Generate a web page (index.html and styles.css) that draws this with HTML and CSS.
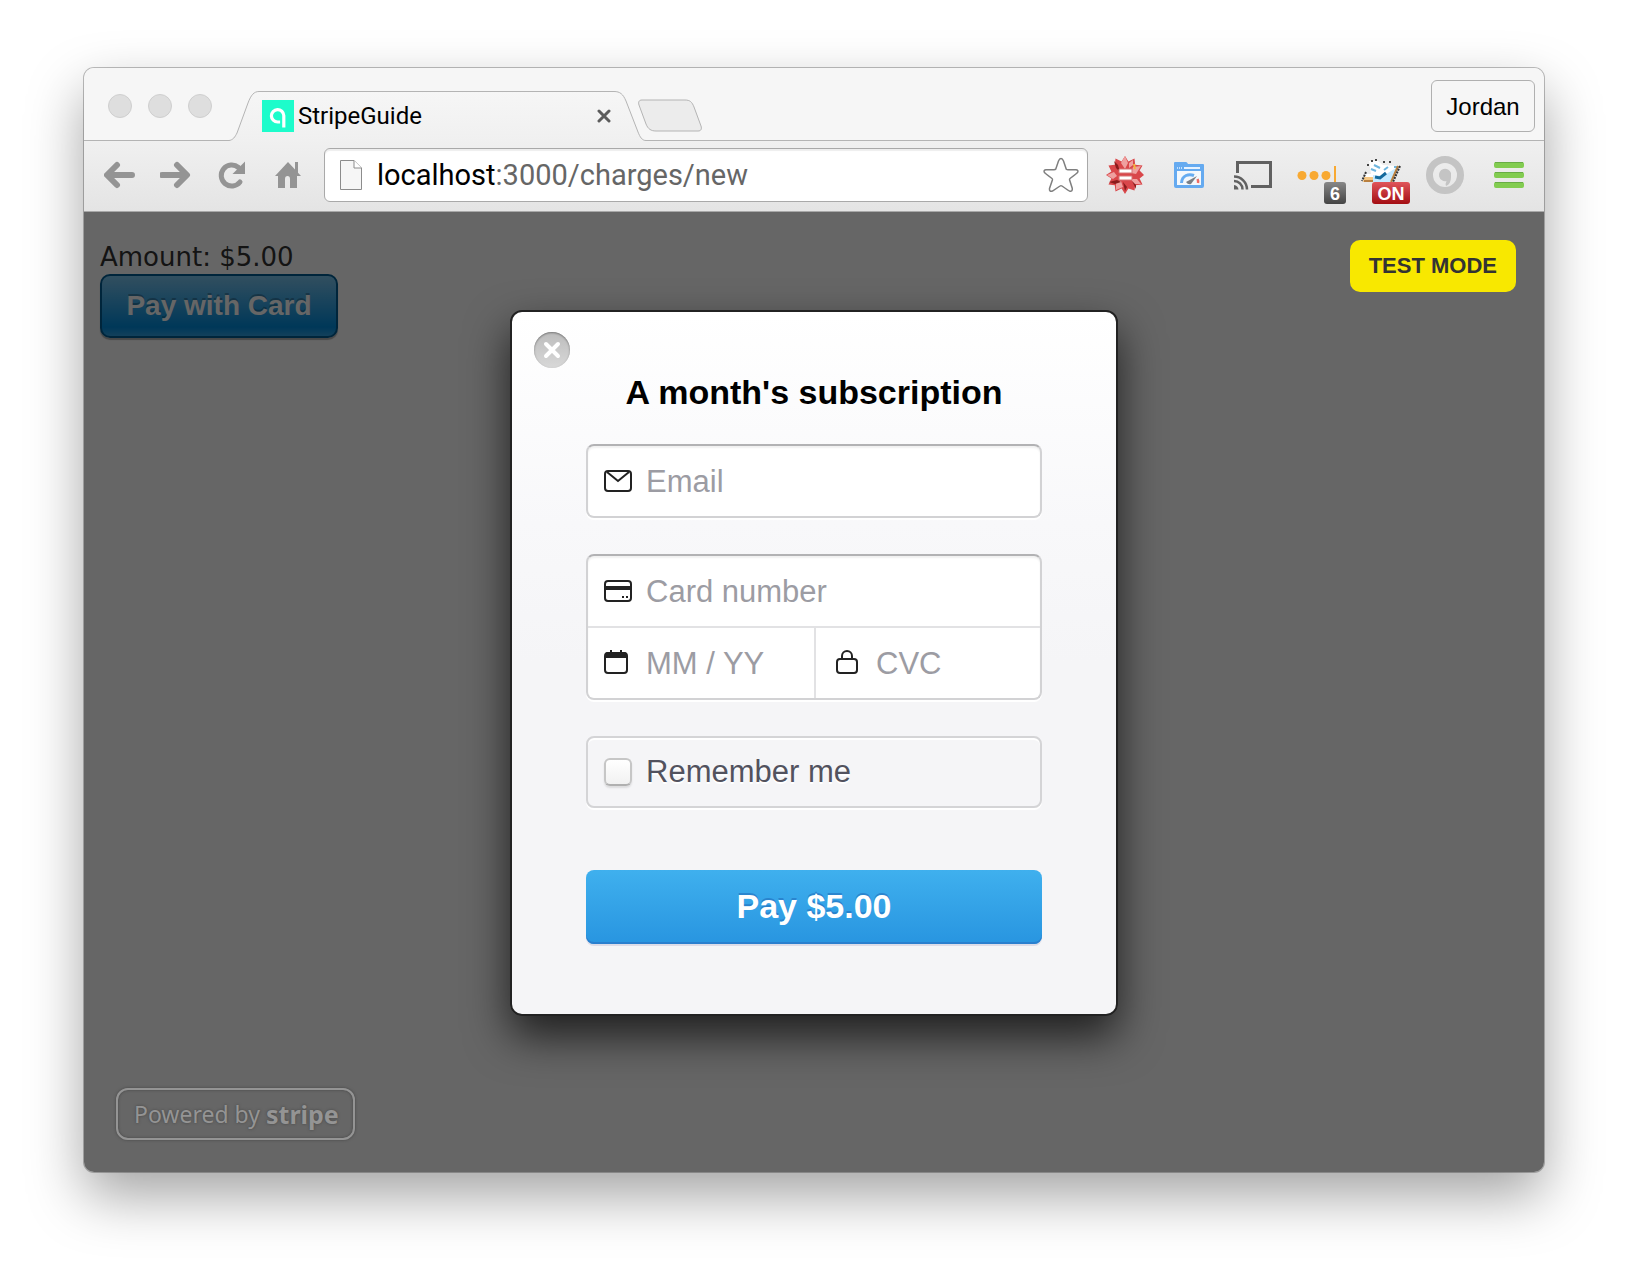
FILE: index.html
```html
<!DOCTYPE html>
<html lang="en">
<head>
  <meta charset="UTF-8" />
  <meta name="viewport" content="width=device-width, initial-scale=1.0"/>
  <title>StripeGuide</title>
  <link rel="stylesheet" href="styles.css">
</head>
<body>

  <div class="window">

    <!-- Tab strip -->
    <header class="tab-strip">
      <div class="lights">
        <span class="light"></span>
        <span class="light"></span>
        <span class="light"></span>
      </div>

      <div class="tab">
        <svg class="tab-shape" viewBox="0 0 417 50" aria-hidden="true">
          <defs>
            <linearGradient id="tabFill" x1="0" y1="0" x2="0" y2="1">
              <stop offset="0" stop-color="#f6f6f6"/>
              <stop offset="1" stop-color="#f0f0f0"/>
            </linearGradient>
          </defs>
          <path d="M0 50V49.5C4 49 6 46 8 42L19 12C22 4 25 .5 30 .5H385C391 .5 394 3 397 10L409 41C411 46 413 49.5 417 49.5V50Z" fill="url(#tabFill)"/>
          <path d="M0 49.5C4 49 6 46 8 42L19 12C22 4 25 .5 30 .5H385C391 .5 394 3 397 10L409 41C411 46 413 49.5 417 49.5" fill="none" stroke="#b4b4b4"/>
        </svg>
        <svg class="favicon" viewBox="0 0 32 32" aria-hidden="true">
          <rect width="32" height="32" fill="#1dfccb"/>
          <path d="M21.800 27.500V15.500a6.200 6.200 0 1 0-6.200 6.500h2.500" fill="none" stroke="#fff" stroke-width="3.200"/>
        </svg>
        <span class="tab-title">StripeGuide</span>
        <button class="tab-close" aria-label="Close tab">
          <svg viewBox="0 0 14 14"><path d="M2 2l10 10M12 2L2 12" stroke="#5c5c5c" stroke-width="3" stroke-linecap="round"/></svg>
        </button>
      </div>

      <button class="new-tab" aria-label="New tab">
        <svg viewBox="0 0 66 34"><path d="M5 1H48C53 1 55 3 57 8L64 27C65 30 64 32 61 32H19C14 32 11 30 9 25L2 6C1 3 2 1 5 1Z" fill="#ececec" stroke="#b4b4b4"/></svg>
      </button>

      <button class="profile">Jordan</button>
    </header>

    <!-- Toolbar -->
    <div class="toolbar">
      <nav class="nav">
        <button aria-label="Back">
          <svg viewBox="0 0 32 32"><path d="M13 6L3 16l10 10M4 16h24" fill="none" stroke="#949494" stroke-width="6" stroke-linecap="round" stroke-linejoin="round"/></svg>
        </button>
        <button aria-label="Forward">
          <svg viewBox="0 0 32 32"><path d="M17 6l10 10-10 10M26 16H2" fill="none" stroke="#949494" stroke-width="6" stroke-linecap="round" stroke-linejoin="round"/></svg>
        </button>
        <button aria-label="Reload">
          <svg viewBox="0 0 32 32"><path d="M22.500 8.500A10.500 10.500 0 1 0 24 23" fill="none" stroke="#949494" stroke-width="5" stroke-linecap="round"/><path d="M29 2.500V15H16.500Z" fill="#949494"/></svg>
        </button>
        <button aria-label="Home">
          <svg viewBox="0 0 32 32"><path d="M16 3L3 17h3v12h7v-9a2.500 3 0 0 1 5 0v9h7V17h4l-3-3.300V3h-3v7.500Z" fill="#949494"/></svg>
        </button>
      </nav>

      <div class="omnibox">
        <svg class="page-icon" viewBox="0 0 24 32" aria-hidden="true">
          <path d="M1.500 1.500H15L22.500 9V30.500H1.500Z" fill="#f6f6f6" stroke="#8c8c8c"/>
          <path d="M15 1.500V9H22.500" fill="#fff" stroke="#8c8c8c"/>
        </svg>
        <p class="url">localhost<span>:3000/charges/new</span></p>
        <button class="bookmark" aria-label="Bookmark">
          <svg viewBox="0 0 36 36"><path d="M18 1.500Q19.500 1.500 20.500 4L23.300 12.200Q24 12.800 25 12.800H33Q35.500 13 34.800 15Q34.500 16 27 21.500Q26.300 22 26.600 23L29.300 31.500Q29.500 34.500 27 34.200Q26 34 19 29Q18 28.300 17 29L9.500 34Q6 35 6.500 31.500L9.400 23Q9.700 22 9 21.500Q1.500 16 1.200 15Q.500 13 3 12.800H11Q12.300 12.800 12.800 12L15.500 4Q16.500 1.500 18 1.500Z" fill="#fff" stroke="#7f7f7f" stroke-width="1.500"/></svg>
        </button>
      </div>

      <div class="extensions">
        <button aria-label="Burst extension">
          <svg viewBox="0 0 40 40">
            <path d="M20 1L23.400 6.400 29.500 3.500 30.200 9.800 37.500 10.500 34.600 15.600 39 20 34.600 23.400 37.500 29.500 30.200 30.200 29.500 35.500 23.400 33.600 20 39 16.600 33.600 10.500 36.500 9.800 30.200 3.500 29.500 6.400 23.400 1 20 6.400 16.600 3.500 10.500 9.800 9.800 10.500 3.500 16.600 6.400Z" fill="#d9474a"/>
            <path d="M20 1L23 8l-3 6-4-6ZM36 11l-5 8-5-1 2-6ZM36 29l-7 0-3-5 6 0ZM11 35l0-7 5-2 2 6ZM2 20l7-3 3 4-4 3ZM28 5l0 5-4 3 0-5Z" fill="#efa09f"/>
            <path d="M9 6l4 4 2 7-4-4ZM4 27l8-2 4 2-6 2ZM20 36l-2-9 4 5ZM27 26l4 4 0 4Z" fill="#8a1c1c"/>
            <path d="M14 14h13v4H14ZM14 21h13v4H14Z" fill="#fff" stroke="#d67475"/>
            <path d="M29 9l1 5" stroke="#f3b53f" stroke-width="2"/>
          </svg>
        </button>
        <button aria-label="Page speed">
          <svg viewBox="0 0 40 40">
            <path d="M5 8q0-1 1-1h11q1 0 2 2h15q1 0 1 1V31q0 2-2 2H7q-2 0-2-2Z" fill="#65aaf0"/>
            <path d="M8 16h24v14H8Z" fill="#f4f8fc"/>
            <path d="M15 13h16" stroke="#e6f2ff" stroke-width="2"/>
            <path d="M8 13h5" stroke="#c0e0ff" stroke-width="2" stroke-dasharray="1 1"/>
            <path d="M12.500 28C13 20 20 18.500 25 20.500" fill="none" stroke="#66acf1" stroke-width="3"/>
            <path d="M17 27l11-6-6 8q-3 1-5-2Z" fill="#7a7f85"/>
            <path d="M28.500 24q1 2 .500 4" fill="none" stroke="#ee6a63" stroke-width="2.500"/>
          </svg>
        </button>
        <button aria-label="Cast">
          <svg viewBox="0 0 40 40" fill="none" stroke="#616161" stroke-width="3">
            <path d="M4.500 18V7.500H37.500V31.500H18"/>
            <path d="M1 21.500a13 13 0 0 1 13 13M1 26a8.500 8.500 0 0 1 8.500 8.500" stroke-width="2.500"/>
            <path d="M1 30q4 .500 4.500 4.500H1Z" fill="#616161" stroke="none"/>
          </svg>
        </button>
        <button aria-label="Dots extension">
          <svg viewBox="0 0 40 40">
            <circle cx="5" cy="20.500" r="4.500" fill="#f8a932"/>
            <circle cx="17" cy="20.500" r="4.500" fill="#f8a932"/>
            <circle cx="29" cy="20.500" r="4.500" fill="#f8a932"/>
            <path d="M38 11v16" stroke="#f8a932" stroke-width="2"/>
          </svg>
          <span class="badge">6</span>
        </button>
        <button aria-label="Notebook extension">
          <svg viewBox="0 0 40 40">
            <path d="M8 6h9l5 4 15 1-7 16-29 0 4-8h5Z" fill="#fff"/>
            <path d="M12 20l10 1 13-8-6 14H12Z" fill="#c6eaff"/>
            <path d="M3 22h9v5H2Z" fill="#f6c782"/>
            <path d="M10 6h2M14 5h2M22 7h2M28 7h2M7 9v2" stroke="#444" stroke-width="2"/>
            <path d="M10 14l5 2M13 10l6 3M27 12l-4 3M33 12h4" fill="none" stroke="#6eb6df" stroke-width="2"/>
            <path d="M14 22l5 1 6-5" fill="none" stroke="#12699c" stroke-width="3"/>
            <path d="M37 11l-7 16M3 26h9" stroke="#b9803f" stroke-width="2"/>
            <path d="M39 11l-7 16M5 17l-4 9" stroke="#333" stroke-width="2" stroke-dasharray="2 1"/>
          </svg>
          <span class="badge badge-on">ON</span>
        </button>
        <button aria-label="Account extension">
          <svg viewBox="0 0 40 40">
            <circle cx="20" cy="20" r="15.500" fill="none" stroke="#c4c4c4" stroke-width="7"/>
            <path d="M26 14.500V22q0 7-5 9-1-2 .500-5A6.200 6.200 0 1 1 26 18Z" fill="#c4c4c4"/>
          </svg>
        </button>
        <button aria-label="Menu">
          <svg viewBox="0 0 40 40" fill="#82cc50">
            <rect x="5" y="7" width="30" height="6" rx="2"/>
            <rect x="5" y="17" width="30" height="6" rx="2"/>
            <rect x="5" y="27" width="30" height="6" rx="2"/>
            <path d="M6 7.500h28M6 17.500h28M6 27.500h28" stroke="#68ad45"/>
          </svg>
        </button>
      </div>
    </div>

    <div class="viewport">
      <!-- Page under the overlay -->
      <main class="page">
        <p class="amount">Amount: $5.00</p>
        <button class="stripe-button">Pay with Card</button>
      </main>

      <!-- Checkout overlay -->
      <div class="overlay">
        <div class="test-mode">TEST MODE</div>

        <div class="modal" role="dialog" aria-labelledby="modalTitle">
          <button class="close" aria-label="Close">
            <svg viewBox="0 0 18 18"><path d="M3 3l12 12M15 3L3 15" stroke="#fff" stroke-width="4" stroke-linecap="round"/></svg>
          </button>
          <form>
            <h1 id="modalTitle">A month's subscription</h1>

            <div class="fieldset">
              <label class="field">
                <svg viewBox="0 0 28 28"><rect x="1" y="4" width="26" height="20" rx="3" fill="none" stroke="#222" stroke-width="2"/><path d="M3 5l11 9L25 5" fill="none" stroke="#222" stroke-width="2"/></svg>
                <input type="email" placeholder="Email" aria-label="Email">
              </label>
            </div>

            <div class="fieldset">
              <label class="field">
                <svg viewBox="0 0 28 28"><rect x="1" y="4" width="26" height="20" rx="3" fill="none" stroke="#222" stroke-width="2"/><path d="M1 9h26v4H1ZM18 19h2v2h-2ZM22 19h2v2h-2Z" fill="#222"/></svg>
                <input type="text" placeholder="Card number" aria-label="Card number">
              </label>
              <div class="field-row">
                <label class="field">
                  <svg viewBox="0 0 28 28"><rect x="1" y="4" width="22" height="20" rx="3" fill="none" stroke="#222" stroke-width="2"/><path d="M1 9V6q0-3 3-3h2V1h2v2h8V1h2v2h2q3 0 3 3v3Z" fill="#222"/></svg>
                  <input type="text" placeholder="MM / YY" aria-label="MM / YY">
                </label>
                <label class="field">
                  <svg viewBox="0 0 28 28"><rect x="1" y="10" width="20" height="14" rx="3" fill="none" stroke="#222" stroke-width="2"/><path d="M6 10V7a5 5 0 0 1 10 0v3" fill="none" stroke="#222" stroke-width="2"/></svg>
                  <input type="text" placeholder="CVC" aria-label="CVC">
                </label>
              </div>
            </div>

            <label class="remember">
              <input type="checkbox">
              Remember me
            </label>

            <button type="button" class="submit">Pay $5.00</button>
          </form>
        </div>

        <a class="powered" href="#">Powered by <strong>stripe</strong></a>
      </div>
    </div>

  </div>

</body>
</html>
```
FILE: styles.css
```css
* {
  box-sizing: border-box;
}

body {
  margin: 0;
  padding: 68px 84px 100px;
  background: #fff;
  font-family: "Liberation Sans", Arial, sans-serif;
}

button {
  padding: 0;
  border: none;
  background: none;
  font-family: inherit;
  cursor: pointer;
}

svg {
  display: block;
}

.window {
  border-radius: 10px;
  box-shadow: 0 0 0 1px rgba(0,0,0,0.25), 0 24px 56px rgba(0,0,0,0.36);
}

/* Tab strip */
.tab-strip {
  display: flex;
  align-items: flex-end;
  height: 73px;
  padding: 0 9px 0 24px;
  background: #f6f6f6;
  border-radius: 10px 10px 0 0;
  box-shadow: inset 0 -1px #b4b4b4;
}

.lights {
  display: flex;
  gap: 16px;
  margin: 0 16px 23px 0;
}

.light {
  width: 24px;
  height: 24px;
  border: 1px solid #cfcfcf;
  border-radius: 50%;
  background: #dedede;
}

.tab {
  position: relative;
  display: flex;
  align-items: center;
  gap: 4px;
  width: 419px;
  height: 50px;
  padding: 0 36px 0 34px;
}

.tab-shape {
  position: absolute;
  left: 0;
  top: 0;
  width: 100%;
  height: 100%;
}

.favicon {
  position: relative;
  width: 32px;
  height: 32px;
}

.tab-title {
  position: relative;
  flex: 1;
  font-family: Roboto, sans-serif;
  font-size: 24px;
}

.tab-close {
  position: relative;
  width: 14px;
}

.new-tab {
  width: 66px;
  height: 34px;
  margin: 0 auto 8px -10px;
}

.profile {
  align-self: flex-start;
  width: 104px;
  height: 52px;
  margin-top: 12px;
  padding-top: 2px;
  border: 1px solid #b0b0b0;
  border-radius: 6px;
  font-size: 24px;
  color: #000;
}

/* Toolbar */
.toolbar {
  display: flex;
  align-items: center;
  padding: 7px 15px 9px 20px;
  background: linear-gradient(#f0f0f0, #e4e4e4);
  border-bottom: 1px solid #a8a8a8;
}

.nav {
  display: flex;
  gap: 24px;
  margin-right: 20px;
}

.nav button {
  width: 32px;
}

.omnibox {
  display: flex;
  flex: 1;
  align-items: center;
  height: 54px;
  margin-right: 17px;
  padding: 0 8px 0 14px;
  background: #fff;
  border: 1px solid #a9a9a9;
  border-radius: 6px;
  box-shadow: inset 0 2px 1px #eee;
}

.page-icon {
  width: 24px;
  height: 32px;
  margin-right: 14px;
}

.url {
  flex: 1;
  margin: 0;
  font-family: Roboto, sans-serif;
  font-size: 29px;
}

.url span {
  color: #666;
}

.bookmark {
  width: 36px;
}

.extensions {
  display: flex;
  gap: 24px;
}

.extensions button {
  position: relative;
  width: 40px;
  height: 40px;
}

.badge {
  position: absolute;
  left: 27px;
  top: 27px;
  width: 22px;
  height: 22px;
  border-radius: 3px;
  background: linear-gradient(#888, #444);
  color: #fff;
  font-size: 18px;
  font-weight: bold;
  line-height: 24px;
}

.badge-on {
  left: 11px;
  width: 38px;
  background: linear-gradient(#e0555a, #a30d12);
}

/* Page and overlay share one grid cell */
.viewport {
  display: grid;
  border-radius: 0 0 10px 10px;
  overflow: hidden;
}

.page,
.overlay {
  grid-area: 1 / 1;
}

.page {
  padding: 28px 16px;
}

.amount {
  margin: 0;
  color: #333;
  font-family: "DejaVu Sans", Verdana, sans-serif;
  font-size: 26px;
  line-height: 34px;
}

.stripe-button {
  width: 238px;
  height: 64px;
  border: 2px solid #015e94;
  border-radius: 10px;
  background: linear-gradient(#7dc5ee, #008cdd 85%, #30a2e4);
  box-shadow: 0 2px 1px rgba(0,0,0,0.3);
  color: #fff;
  font-size: 28px;
  font-weight: bold;
  text-shadow: 0 -2px rgba(0,0,0,0.25);
}

.overlay {
  z-index: 1;
  display: flex;
  flex-direction: column;
  align-items: center;
  padding: 28px 28px 32px;
  background: rgba(0,0,0,0.6);
}

.test-mode {
  align-self: flex-end;
  margin-bottom: 18px;
  padding: 0 19px;
  border-radius: 10px;
  background: #f8e800;
  color: #333;
  font-size: 22px;
  font-weight: bold;
  line-height: 52px;
}

.modal {
  width: 100%;
  max-width: 608px;
  padding: 20px 22px 70px;
  border: 2px solid #222;
  border-radius: 12px;
  background: linear-gradient(#fff, #f8f8fa 30%, #f5f5f7 50%);
  box-shadow: 0 20px 44px rgba(0,0,0,0.7);
}

.close {
  display: grid;
  place-items: center;
  width: 36px;
  height: 36px;
  border-radius: 50%;
  background: linear-gradient(#bcbcbc, #d8d8d8);
  box-shadow: inset 0 1px 2px #777;
}

.close svg {
  width: 18px;
}

form {
  padding: 0 52px;
}

h1 {
  margin: 4px 0 32px;
  font-size: 34px;
  line-height: 40px;
  text-align: center;
  white-space: nowrap;
}

.fieldset {
  margin-bottom: 36px;
  border: 2px solid #d2d2d4;
  border-top-color: #b2b2b4;
  border-radius: 8px;
  background: #fff;
  box-shadow: 0 2px #fff, inset 0 2px 2px #f1f1f1;
}

.field {
  display: flex;
  align-items: center;
  gap: 14px;
  height: 70px;
  padding: 0 16px;
}

.field svg,
.remember input {
  flex: none;
  width: 28px;
  height: 28px;
}

.field input {
  width: 100%;
  min-width: 0;
  padding: 2px 0 0;
  border: none;
  outline: none;
  background: none;
  font-family: inherit;
  font-size: 31px;
}

.field input::placeholder {
  color: #9c9ca3;
  opacity: 1;
}

.field-row {
  display: grid;
  grid-template-columns: 1fr 1fr;
  border-top: 2px solid #e2e2e4;
}

.field-row .field + .field {
  gap: 12px;
  padding-left: 20px;
  border-left: 2px solid #e2e2e4;
}

.remember {
  display: flex;
  align-items: center;
  gap: 14px;
  height: 72px;
  margin-bottom: 62px;
  padding: 0 16px;
  border: 2px solid #d4d4d6;
  border-radius: 8px;
  box-shadow: 0 2px #fff, inset 0 2px #fff;
  color: #52525e;
  font-size: 31px;
  text-shadow: 0 2px #fff;
}

.remember input {
  margin: 0;
  appearance: none;
  border: 2px solid #c6c6c6;
  border-bottom-color: #b0b0b0;
  border-radius: 6px;
  background: linear-gradient(#fff, #f1f1f1);
  box-shadow: 0 2px 2px rgba(0,0,0,0.1);
}

.submit {
  display: block;
  width: 100%;
  height: 74px;
  padding-bottom: 2px;
  border-radius: 8px;
  background: linear-gradient(#3fb0ee, #2895e0);
  box-shadow: inset 0 -2px #2a7fce, 0 2px #dcdce8;
  color: #fff;
  font-size: 34px;
  font-weight: bold;
  text-shadow: 0 -2px rgba(30,100,180,0.5);
}

.powered {
  display: flex;
  align-self: flex-start;
  align-items: center;
  gap: 6px;
  height: 52px;
  margin: 72px 0 0 4px;
  padding: 0 14px 0 16px;
  border: 2px solid #949494;
  border-radius: 12px;
  box-shadow: 0 0 3px #444, inset 0 0 3px #444;
  color: #949494;
  font-family: "Noto Sans", sans-serif;
  font-size: 23px;
  text-decoration: none;
  text-shadow: 0 0 3px #444;
}

.powered strong {
  font-size: 25px;
}
```
